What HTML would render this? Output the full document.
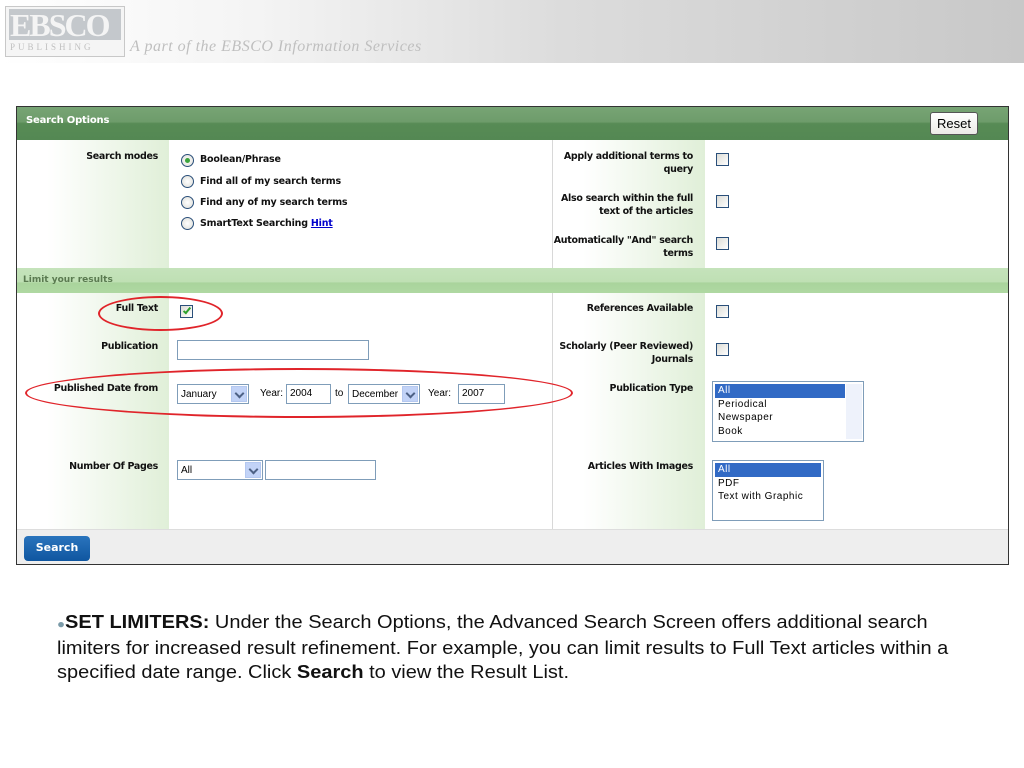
<!DOCTYPE html>
<html><head><meta charset="utf-8"><style>
*{margin:0;padding:0;box-sizing:border-box}
body{width:1024px;height:768px;background:#fff;position:relative;overflow:hidden;font-family:"DejaVu Sans",sans-serif}
.a{position:absolute}
.lb{position:absolute;font:bold 9.5px "DejaVu Sans",sans-serif;color:#111;text-align:right;line-height:13px;letter-spacing:-0.3px}
.t{position:absolute;font:bold 9.5px "DejaVu Sans",sans-serif;color:#111;letter-spacing:-0.2px}
.cb{position:absolute;width:13px;height:13px;border:1px solid #2a4f7a;background:linear-gradient(135deg,#dcdcd6,#fff)}
.rd{position:absolute;width:13px;height:13px;border:1px solid #2a4f7a;border-radius:50%;background:radial-gradient(circle,#fff,#dcdcd6)}
.in{position:absolute;border:1px solid #7f9db9;background:#fff;height:20px;font:10px "Liberation Sans",sans-serif;padding:3px 3px}
.sel{position:absolute;border:1px solid #7f9db9;background:#fff;height:20px;font:10px "Liberation Sans",sans-serif;padding:4px 3px}
.sel i{position:absolute;right:1px;top:1px;width:16px;height:16px;background:#c2d3f7;border:1px solid #b4c8f0}
.sel i:after{content:"";position:absolute;left:4px;top:3px;width:5px;height:5px;border-right:2px solid #4d6185;border-bottom:2px solid #4d6185;transform:rotate(45deg)}
.lst{position:absolute;border:1px solid #7f9db9;background:#fff;font:10px "Liberation Sans",sans-serif;letter-spacing:.5px}
.lst div{height:13.5px;padding-left:3px;line-height:13.5px}
.lst .h{background:#316ac5;color:#fff}
.ell{position:absolute;border:2px solid #e0242a;border-radius:50%}
</style></head><body>
<div class="a" style="left:0;top:0;width:1024px;height:63px;background:linear-gradient(90deg,#fff 0%,#f4f4f4 25%,#dcdcdc 55%,#c8c8c8 100%)"></div>
<div class="a" style="left:5px;top:6px;width:120px;height:51px;border:1px solid #c8c8c8;background:#f5f5f5"></div>
<div class="a" style="left:9px;top:9px;width:112px;height:31px;background:#c4c8cc"></div>
<div class="a" style="left:10px;top:8px;font:bold 32px 'Liberation Serif',serif;color:#f4f4f4;letter-spacing:-2px;line-height:34px">EBSCO</div>
<div class="a" style="left:10px;top:42px;font:9px 'Liberation Serif',serif;color:#c0c0c0;letter-spacing:3px">PUBLISHING</div>
<div class="a" style="left:130px;top:38px;font:italic 16px 'Liberation Serif',serif;color:#bfbfbf;letter-spacing:.5px;white-space:nowrap">A part of the EBSCO Information Services</div>

<div class="a" style="left:16px;top:106px;width:993px;height:459px;border:1px solid #333;background:#fff"></div>
<div class="a" style="left:17px;top:107px;width:991px;height:33px;background:linear-gradient(#77a474 0,#6e9c6b 45%,#578b55 50%,#548853 100%)"></div>
<div class="a" style="left:26px;top:115px;font:bold 10px 'DejaVu Sans',sans-serif;color:#fff;letter-spacing:-.2px">Search Options</div>
<div class="a" style="left:930px;top:112px;width:48px;height:23px;border:1px solid #555;border-radius:3px;background:linear-gradient(#fff,#ecebe6);font:13px 'Liberation Sans',sans-serif;text-align:center;line-height:21px">Reset</div>

<div class="a" style="left:17px;top:140px;width:152px;height:389px;background:linear-gradient(90deg,#fff 20%,#e0efd8 100%)"></div>
<div class="a" style="left:552px;top:140px;width:153px;height:389px;border-left:1px solid #d8d8d8;background:linear-gradient(90deg,#fff 20%,#e0efd8 100%)"></div>
<div class="a" style="left:17px;top:268px;width:991px;height:25px;background:linear-gradient(#c5e3bb 0,#bfe0b4 55%,#a9d49c 60%,#afd8a2 100%)"></div>
<div class="a" style="left:23px;top:275px;font:bold 9px 'DejaVu Sans',sans-serif;color:#5a7a50">Limit your results</div>
<div class="a" style="left:17px;top:529px;width:991px;height:35px;border-top:1px solid #ddd;background:#eeeeee"></div>
<div class="a" style="left:24px;top:536px;width:66px;height:25px;border-radius:4px;background:linear-gradient(#2a74bd,#0f56a0);font:bold 11px 'DejaVu Sans',sans-serif;color:#fff;text-align:center;line-height:24px">Search</div>

<div class="lb" style="right:866px;top:150px">Search modes</div>
<div class="rd" style="left:181px;top:154px"></div><div class="a" style="left:185px;top:158px;width:5px;height:5px;border-radius:50%;background:#3ca43c"></div>
<div class="t" style="left:200px;top:154px">Boolean/Phrase</div>
<div class="rd" style="left:181px;top:175px"></div><div class="t" style="left:200px;top:176px">Find all of my search terms</div>
<div class="rd" style="left:181px;top:196px"></div><div class="t" style="left:200px;top:197px">Find any of my search terms</div>
<div class="rd" style="left:181px;top:217px"></div><div class="t" style="left:200px;top:218px">SmartText Searching <span style="color:#00c;text-decoration:underline">Hint</span></div>

<div class="lb" style="right:331px;top:150px">Apply additional terms to<br>query</div>
<div class="cb" style="left:716px;top:153px"></div>
<div class="lb" style="right:331px;top:192px">Also search within the full<br>text of the articles</div>
<div class="cb" style="left:716px;top:195px"></div>
<div class="lb" style="right:331px;top:234px">Automatically "And" search<br>terms</div>
<div class="cb" style="left:716px;top:237px"></div>

<div class="lb" style="right:866px;top:302px">Full Text</div>
<div class="cb" style="left:180px;top:305px"></div><div class="a" style="left:185px;top:306px;width:4px;height:8px;border-right:2px solid #2da02d;border-bottom:2px solid #2da02d;transform:rotate(40deg)"></div>
<div class="lb" style="right:866px;top:340px">Publication</div>
<div class="in" style="left:177px;top:340px;width:192px"></div>
<div class="lb" style="right:866px;top:382px">Published Date from</div>
<div class="sel" style="left:177px;top:384px;width:72px">January<i></i></div>
<div class="a" style="left:260px;top:388px;font:10px 'Liberation Sans',sans-serif">Year:</div>
<div class="in" style="left:286px;top:384px;width:45px">2004</div>
<div class="a" style="left:335px;top:388px;font:10px 'Liberation Sans',sans-serif">to</div>
<div class="sel" style="left:348px;top:384px;width:72px">December<i></i></div>
<div class="a" style="left:428px;top:388px;font:10px 'Liberation Sans',sans-serif">Year:</div>
<div class="in" style="left:458px;top:384px;width:47px">2007</div>
<div class="lb" style="right:866px;top:460px">Number Of Pages</div>
<div class="sel" style="left:177px;top:460px;width:86px">All<i></i></div>
<div class="in" style="left:265px;top:460px;width:111px"></div>

<div class="lb" style="right:331px;top:302px">References Available</div>
<div class="cb" style="left:716px;top:305px"></div>
<div class="lb" style="right:331px;top:340px">Scholarly (Peer Reviewed)<br>Journals</div>
<div class="cb" style="left:716px;top:343px"></div>
<div class="lb" style="right:331px;top:382px">Publication Type</div>
<div class="lst" style="left:712px;top:381px;width:152px;height:61px;padding:2px"><div class="h" style="width:130px">All</div><div>Periodical</div><div>Newspaper</div><div>Book</div>
<span class="a" style="left:133px;top:2px;width:16px;height:55px;background:#eef2fb"></span></div>
<div class="lb" style="right:331px;top:460px">Articles With Images</div>
<div class="lst" style="left:712px;top:460px;width:112px;height:61px;padding:2px"><div class="h">All</div><div>PDF</div><div>Text with Graphic</div></div>

<div class="ell" style="left:98px;top:296px;width:125px;height:35px"></div>
<div class="ell" style="left:25px;top:368px;width:548px;height:50px"></div>

<div class="a" style="left:57px;top:610px;width:900px;font:18px 'Liberation Sans',sans-serif;line-height:24px;color:#111;white-space:nowrap;transform:scaleX(1.11);transform-origin:0 0"><span style="color:#7a9aa8;font-size:12px">●</span><b>SET LIMITERS:</b> Under the Search Options, the Advanced Search Screen offers additional search<br>limiters for increased result refinement. For example, you can limit results to Full Text articles within a<br>specified date range. Click <b>Search</b> to view the Result List.</div>
</body></html>
